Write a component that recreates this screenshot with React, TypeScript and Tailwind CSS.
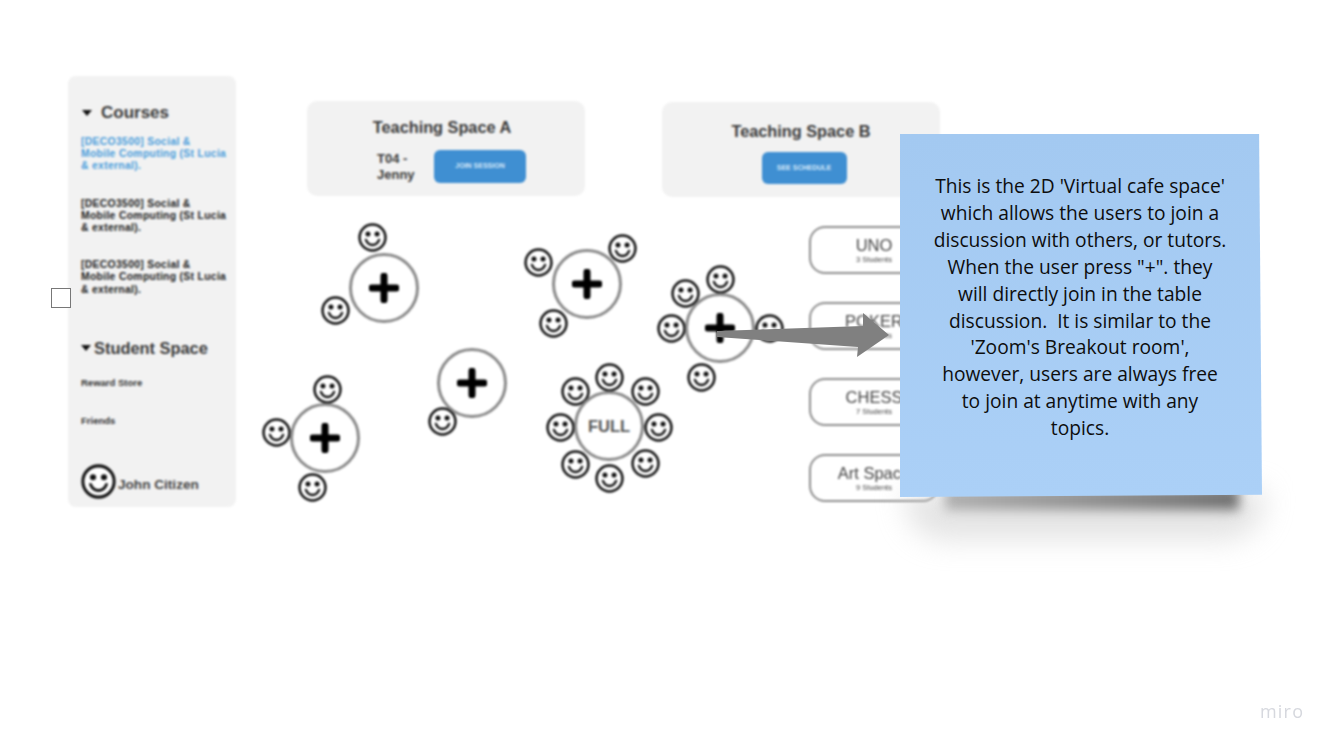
const tables = [
  { x: 384, y: 288, faces: [[372, 237], [335, 310]] },
  { x: 587, y: 284, faces: [[538, 262], [622, 248], [553, 323]] },
  { x: 720, y: 328, faces: [[720, 279], [685, 293], [671, 328], [769, 328], [701, 377]] },
  { x: 472, y: 383, faces: [[442, 421]] },
  { x: 325, y: 438, faces: [[327, 389], [276, 432], [312, 487]] },
  {
    x: 609,
    y: 426,
    full: true,
    faces: [[609, 377], [575, 391], [645, 391], [560, 427], [658, 427], [575, 464], [645, 463], [609, 478]],
  },
];

const rooms = [
  { name: "UNO", sub: "3 Students" },
  { name: "POKER", sub: "5 Students" },
  { name: "CHESS", sub: "7 Students" },
  { name: "Art Space", sub: "9 Students" },
];

const Smiley = ({ size = 29 }: { size?: number }) => (
  <svg width={size} height={size} viewBox="0 0 30 30" fill="none" className="block">
    <circle cx="15" cy="15" r="13.4" fill="#fff" stroke="#111" strokeWidth="2.6" />
    <circle cx="10.3" cy="11.3" r="2.6" fill="#111" />
    <circle cx="19.7" cy="11.3" r="2.6" fill="#111" />
    <path d="M8.2 17.5c1.5 3.8 3.9 5.2 6.8 5.2s5.3-1.4 6.8-5.2" stroke="#111" strokeWidth="2.5" strokeLinecap="round" />
  </svg>
);

const CourseLink = ({ active }: { active?: boolean }) => (
  <p className={`text-[10.4px] leading-[12.2px] font-bold tracking-[0.3px] whitespace-nowrap ${active ? "text-[#4a9ddb]" : "text-[#222]"}`}>
    [DECO3500] Social &amp;
    <br />
    Mobile Computing (St Lucia
    <br />
    &amp; external).
  </p>
);

const Caret = () => <span className="w-0 h-0 border-x-[5.5px] border-x-transparent border-t-[6px] border-t-[#111]" />;

const Sidebar = () => (
  <aside className="absolute left-[68px] top-[76px] w-[168px] h-[431px] rounded-[8px] bg-[#f2f2f2] pl-[13px] pr-[8px] pt-[27px] flex flex-col">
    <div className="flex items-center gap-[9px] pl-px">
      <Caret />
      <h3 className="text-[17px] leading-5 font-bold text-[#3a3a3a]">Courses</h3>
    </div>
    <div className="mt-[13px] flex flex-col gap-[25px]">
      <CourseLink active />
      <CourseLink />
      <CourseLink />
    </div>
    <div className="mt-[42px] flex items-center gap-[3px]">
      <Caret />
      <h3 className="text-[16.4px] leading-5 font-bold text-[#3a3a3a]">Student Space</h3>
    </div>
    <p className="mt-[19px] text-[9.5px] leading-3 font-bold text-[#333]">Reward Store</p>
    <p className="mt-[26px] text-[9.5px] leading-3 font-bold text-[#333]">Friends</p>
    <div className="mt-[37px] flex items-center gap-[2px]">
      <Smiley size={35} />
      <span className="mt-[7px] text-[13.6px] font-bold text-[#444]">John Citizen</span>
    </div>
  </aside>
);

const SpaceA = () => (
  <section className="absolute left-[307px] top-[101px] w-[278px] h-[95px] rounded-[10px] bg-[#f2f2f2] pt-[16px] pr-[8px] flex flex-col items-center">
    <h3 className="text-[16.3px] leading-5 font-bold text-[#3a3a3a]">Teaching Space A</h3>
    <div className="mt-[13px] flex items-center self-start pl-[70px] gap-[17px]">
      <p className="text-[13px] leading-[16px] font-bold text-[#3a3a3a] w-[40px]">T04 - Jenny</p>
      <button className="w-[92px] h-[33px] rounded-[6px] bg-[#3f8fd2] text-[7px] font-bold text-[#d8eafa]">JOIN SESSION</button>
    </div>
  </section>
);

const SpaceB = () => (
  <section className="absolute left-[662px] top-[102px] w-[278px] h-[95px] rounded-[10px] bg-[#f2f2f2] pt-[19px] flex flex-col items-center">
    <h3 className="text-[16.3px] leading-5 font-bold text-[#3a3a3a]">Teaching Space B</h3>
    <button className="mt-[11px] ml-[6px] w-[85px] h-[32px] rounded-[6px] bg-[#3f8fd2] text-[7px] font-bold text-[#d8eafa]">SEE SCHEDULE</button>
  </section>
);

const RoomList = () => (
  <div className="absolute left-[809px] top-[226px] w-[130px] flex flex-col gap-[28px]">
    {rooms.map((room) => (
      <div
        key={room.name}
        className="h-[48px] rounded-[16px] border-2 border-[#8e8e8e] bg-white flex flex-col items-center pt-[7px] overflow-hidden"
      >
        <span className="text-[16.5px] leading-[20px] text-[#444] whitespace-nowrap">{room.name}</span>
        <span className="text-[7.5px] leading-[9px] text-[#444]">{room.sub}</span>
      </div>
    ))}
  </div>
);

const Tables = () => (
  <>
    {tables.map((t) => (
      <div key={`${t.x}-${t.y}`}>
        {t.faces.map(([fx, fy]) => (
          <div key={`${fx}-${fy}`} className="absolute" style={{ left: fx - 14.5, top: fy - 14.5 }}>
            <Smiley />
          </div>
        ))}
        <div
          className="absolute w-[70px] h-[70px] rounded-full border-[3px] border-[#8a8a8a] bg-white flex items-center justify-center"
          style={{ left: t.x - 35, top: t.y - 35 }}
        >
          {t.full ? (
            <span className="text-[16.5px] font-bold text-[#555]">FULL</span>
          ) : (
            <svg width="30" height="30" viewBox="0 0 30 30">
              <path d="M15 3v24M3 15h24" stroke="#000" strokeWidth="7" strokeLinecap="round" />
            </svg>
          )}
        </div>
      </div>
    ))}
  </>
);

const StickyNote = () => (
  <>
    <div className="absolute left-[905px] top-[490px] w-[360px] h-[50px] rounded-b-[40px] bg-[#c4c4c4]/45 blur-[14px]" />
    <div className="absolute left-[945px] top-[488px] w-[294px] h-[22px] bg-gradient-to-r from-[#b0b0b0] to-[#707070] blur-[6px]" />
    <div className="absolute left-[900px] top-[134px] w-[362px] h-[363px] bg-gradient-to-b from-[#a3c9f1] to-[#abd0f7] [clip-path:polygon(0_0,99.2%_0,100%_99.4%,0_100%)] pt-[39px] pl-[32px] pr-[34px] font-['Open_Sans',sans-serif] text-[19.2px] leading-[26.9px] text-[#0d0d0d] text-center">
      This is the 2D 'Virtual cafe space' which allows the users to join a discussion with others, or tutors. When the user press "+". they will directly join in the table discussion.&nbsp; It is similar to the 'Zoom's Breakout room', however, users are always free to join at anytime with any topics.
    </div>
  </>
);

const Arrow = () => (
  <svg className="absolute left-[710px] top-[310px]" width="190" height="55" viewBox="0 0 190 55">
    <polygon points="7,21 153,16 153,3 179,25 147,47 148,37 7,27" fill="#808080" />
  </svg>
);

export default function App() {
  return (
    <div className="relative w-[1334px] h-[749px] overflow-hidden bg-white font-['Liberation_Sans',sans-serif]">
      <div className="absolute inset-0 blur-[0.9px]">
        <Sidebar />
        <SpaceA />
        <SpaceB />
        <Tables />
        <RoomList />
      </div>
      <div className="absolute left-[51px] top-[288px] w-[20px] h-[20px] border border-[#777] bg-white" />
      <StickyNote />
      <Arrow />
      <span className="absolute left-[1260px] top-[699px] font-['Open_Sans',sans-serif] text-[18px] leading-6 tracking-[1.2px] text-[#d6d8de]">miro</span>
    </div>
  );
}
